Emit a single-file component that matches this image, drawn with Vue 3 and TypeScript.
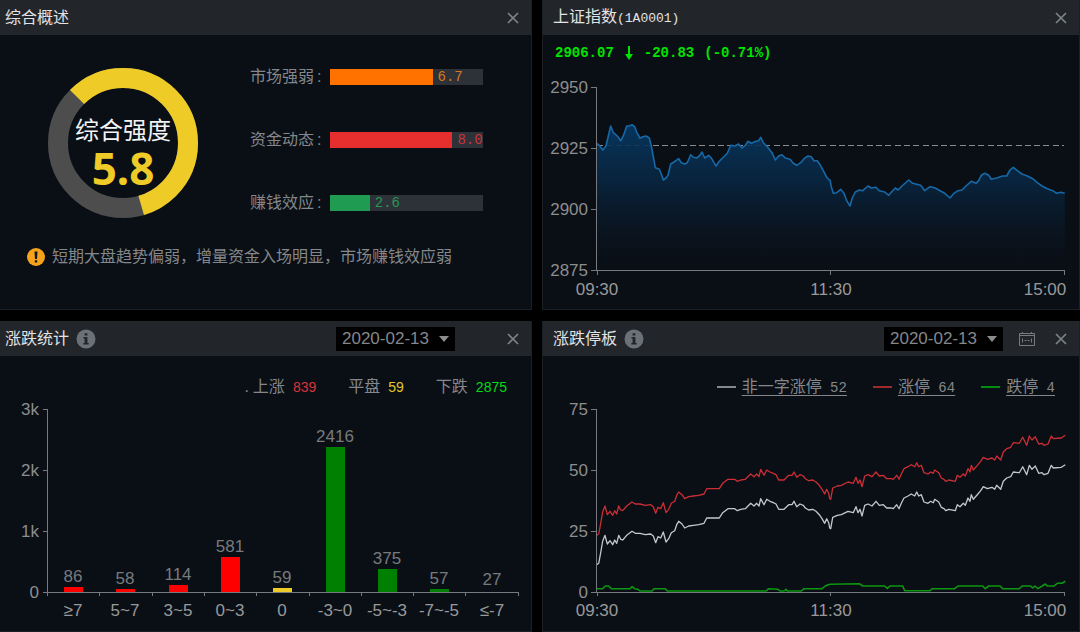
<script setup lang="ts">
import { ref } from 'vue'

type Point = [number, number]

interface Strength {
  label: string
  value: number
  tone: string
}

interface RangeBar {
  range: string
  count: number
  tone: string
}

const SESSION_WIDTH = 240
const UNITS_PER_PIXEL = 3
const ONE_WORD_GAP = 88

const score = 5.8

const strengths: Strength[] = [
  { label: '市场强弱', value: 6.7, tone: 'orange' },
  { label: '资金动态', value: 8, tone: 'red' },
  { label: '赚钱效应', value: 2.6, tone: 'green' },
]

const dates = ['2020-02-13', '2020-02-12', '2020-02-11']
const statsDate = ref(dates[0])
const limitDate = ref(dates[0])

const ranges: RangeBar[] = [
  { range: '≥7', count: 86, tone: 'up' },
  { range: '5~7', count: 58, tone: 'up' },
  { range: '3~5', count: 114, tone: 'up' },
  { range: '0~3', count: 581, tone: 'up' },
  { range: '0', count: 59, tone: 'flat' },
  { range: '-3~0', count: 2416, tone: 'down' },
  { range: '-5~-3', count: 375, tone: 'down' },
  { range: '-7~-5', count: 57, tone: 'down' },
  { range: '≤-7', count: 27, tone: 'down' },
]

const totals = [
  { label: '上涨', value: 839, tone: 'rise' },
  { label: '平盘', value: 59, tone: 'even' },
  { label: '下跌', value: 2875, tone: 'fall' },
]

const limits = [
  { label: '非一字涨停', value: 52, tone: 'white' },
  { label: '涨停', value: 64, tone: 'red' },
  { label: '跌停', value: 4, tone: 'green' },
]

const BAR_LEFT = 47
const BAR_STEP = 52.3
const BAR_BASE = 192

const bars = ranges.map((item, i) => {
  const height = Math.round(item.count * 0.06)
  const center = Math.round(BAR_LEFT + BAR_STEP * (i + 0.5))
  return { ...item, height, center, top: BAR_BASE - height }
})
const barTicks = Array.from({ length: ranges.length + 1 }, (_, i) => Math.round(BAR_LEFT + BAR_STEP * i))

const parse = (text: string): Point[] =>
  text.trim().split(/\s+/).map((pair) => pair.split(',').map(Number) as Point)

function place(points: Point[], x: number, y: number): string {
  return points.map(([px, py]) => `${(x + px / UNITS_PER_PIXEL).toFixed(1)},${(y + py / UNITS_PER_PIXEL).toFixed(1)}`).join(' ')
}

const indexMorning = parse(`
  18,130 26,134 38,150 48,138 55,108 62,78 70,98 82,108 92,122 100,108 110,78 118,78 126,74 134,80 140,96 150,115
  158,110 168,108 178,114 184,138 190,170 196,203 208,208 214,222 220,240 228,234 234,226 242,192 252,186 266,176
  274,188 284,192 292,188 302,164 310,172 320,174 328,168 336,156 344,174 356,166 364,174 372,188 378,198 388,184
  400,172 412,160 422,136 434,138 446,132 456,144 466,136 474,124 484,130 498,124 506,122 512,112 520,128 532,140
  546,158 556,180 566,168 576,164 586,174 600,178 610,190 620,196 632,188 642,176 654,168 664,170 672,182 682,182
  690,194 700,212 710,232 718,240`)
const indexAfternoon = parse(`
  0,150 4,170 10,190 20,188 32,178 42,190 50,212 60,228 66,206 76,186 88,180 98,182 114,168 124,174 138,172 148,182
  164,186 176,196 188,182 196,174 204,180 216,168 236,150 248,160 272,166 284,182 300,170 316,174 330,182 344,190
  360,204 372,190 384,182 396,180 408,168 424,154 438,160 446,152 454,136 464,130 476,136 484,148 500,144 518,138
  530,138 540,120 550,112 562,122 576,132 592,138 608,146 622,158 636,168 652,176 668,182 680,190 692,187 704,190`)

const limitUpMorning = parse(`
  20,406 26,402 32,370 38,335 45,318 52,344 60,334 68,346 74,332 80,342 86,318 92,330 98,332 110,318 126,306 136,312
  150,312 166,316 182,314 190,320 197,340 204,322 212,326 220,308 228,338 236,328 244,310 254,304 260,286 266,276
  276,284 284,296 296,290 310,288 326,286 342,282 350,266 388,266 398,250 414,238 434,238 442,244 452,240 466,238
  482,222 492,230 500,222 507,230 512,208 522,226 530,210 540,216 550,220 558,224 566,240 582,240 596,226 606,226
  612,216 620,232 630,224 640,228 646,236 656,242 668,240 678,246 688,256 696,268 704,282 710,268 716,280 719,296`)
const limitUpAfternoon = parse(`
  2,298 8,264 22,258 34,256 54,246 70,250 78,232 84,250 90,240 96,260 104,228 114,224 126,230 138,216 148,228 160,226
  170,236 184,236 190,238 200,226 207,238 214,222 222,206 234,200 244,194 254,200 260,188 266,200 274,196 282,218
  294,222 302,216 310,220 314,210 326,218 334,234 342,238 347,244 356,240 376,244 382,226 390,232 400,222 406,228
  414,206 420,216 424,196 430,210 442,196 452,184 460,172 472,178 486,174 494,180 500,168 512,180 520,156 530,146
  542,142 550,128 568,130 578,112 590,136 598,108 606,120 616,110 626,132 636,130 642,136 654,132 664,108 670,116
  694,114 706,106`)
const limitDownMorning = parse(`
  20,566 38,566 46,558 56,558 64,566 120,566 126,560 134,566 144,568 150,573 186,573 192,566 226,566 232,573 528,573
  536,566 564,568 570,573 582,573 588,568 592,573 634,573 642,566 696,566 706,558 714,554`)
const limitDownAfternoon = parse(`
  0,553 88,551 98,558 164,558 172,565 180,558 218,558 224,572 300,572 306,566 374,566 384,558 458,558 466,566 476,558
  510,558 518,566 568,566 576,558 602,558 608,564 614,558 624,566 646,552 652,558 672,558 682,550 696,550 706,544`)

const PLOT_X = 47
const joinDay = (morning: Point[], afternoon: Point[], y: number, y2 = y): string =>
  `${place(morning, PLOT_X, y)} ${place(afternoon, PLOT_X + SESSION_WIDTH, y2)}`
const lower = (points: Point[]): Point[] => points.map(([x, y]) => [x, y + ONE_WORD_GAP])

const indexLine = joinDay(indexMorning, indexAfternoon, 30, 60)
const limitUpLine = joinDay(limitUpMorning, limitUpAfternoon, 0)
const oneWordLine = joinDay(lower(limitUpMorning), lower(limitUpAfternoon), 0)
const limitDownLine = joinDay(limitDownMorning, limitDownAfternoon, 0)

const indexScale = [
  { label: '2950', y: 17 },
  { label: '2925', y: 78 },
  { label: '2900', y: 139 },
  { label: '2875', y: 200 },
]
const limitScale = [
  { label: '75', y: 9 },
  { label: '50', y: 70 },
  { label: '25', y: 131 },
  { label: '0', y: 192 },
]
const statsScale = [
  { label: '3k', y: 9 },
  { label: '2k', y: 70 },
  { label: '1k', y: 131 },
  { label: '0', y: 192 },
]
</script>

<template>
  <main class="board">
    <section class="panel">
      <header class="bar">
        <h2>综合概述</h2>
        <span class="spacer"></span>
        <button class="icon-btn" type="button" aria-label="关闭">
          <svg width="12" height="12" viewBox="0 0 12 12"><path class="cross" d="M1 1L11 11M11 1L1 11" /></svg>
        </button>
      </header>
      <div class="overview">
        <div class="summary">
          <div class="gauge">
            <svg width="150" height="150" viewBox="0 0 150 150">
              <circle class="ring" cx="75" cy="75" r="65" />
              <circle
                class="ring-value"
                cx="75"
                cy="75"
                r="65"
                pathLength="100"
                :stroke-dasharray="`${score * 10} ${100 - score * 10}`"
                transform="rotate(-135 75 75)"
              />
            </svg>
            <div class="gauge-text">
              <span class="gauge-label">综合强度</span>
              <strong class="gauge-score">{{ score }}</strong>
            </div>
          </div>
          <dl class="strengths">
            <div v-for="item in strengths" :key="item.label" class="strength">
              <dt>{{ item.label }}<span class="colon">:</span></dt>
              <dd :class="['track', item.tone]">
                <span class="fill" :style="{ width: item.value * 10 + '%' }"></span>
                <span class="track-value">{{ item.value.toFixed(1) }}</span>
              </dd>
            </div>
          </dl>
        </div>
        <p class="tip">
          <svg width="20" height="20" viewBox="0 0 20 20">
            <circle cx="10" cy="10" r="9" fill="#f5a31c" />
            <path d="M8.5 4.500h3l-.5 7.500h-2zM8.800 13.200h2.400v2.300h-2.400z" fill="#10141b" />
          </svg>
          短期大盘趋势偏弱，增量资金入场明显，市场赚钱效应弱
        </p>
      </div>
    </section>

    <section class="panel right">
      <header class="bar">
        <h2>上证指数<span class="code">(1A0001)</span></h2>
        <span class="spacer"></span>
        <button class="icon-btn" type="button" aria-label="关闭">
          <svg width="12" height="12" viewBox="0 0 12 12"><path class="cross" d="M1 1L11 11M11 1L1 11" /></svg>
        </button>
      </header>
      <p class="quote">
        <span>2906.07</span>
        <svg width="10" height="16" viewBox="0 0 10 16"><path d="M4 1h2v8h3L5 15 1 9h3z" fill="#00e400" /></svg>
        <span>-20.83</span>
        <span>(-0.71%)</span>
      </p>
      <svg class="chart" viewBox="0 0 536 239">
        <defs>
          <linearGradient id="area" x1="0" y1="55" x2="0" y2="200" gradientUnits="userSpaceOnUse">
            <stop offset="0" stop-color="#073760" stop-opacity="0.95" />
            <stop offset="0.4" stop-color="#082845" stop-opacity="0.8" />
            <stop offset="1" stop-color="#0a1420" stop-opacity="0" />
          </linearGradient>
        </defs>
        <path class="dashed" d="M54 75H521" />
        <polygon :points="`53,200 ${indexLine} 522,200`" fill="url(#area)" />
        <polyline class="line blue" :points="indexLine" />
        <path class="axis" d="M53 17V200M53 200H522M54 200v5M287 200v5M521 200v5" />
        <g v-for="tick in indexScale" :key="tick.label">
          <path class="axis" :d="`M48 ${tick.y}h5`" />
          <text class="scale" x="45" :y="tick.y + 6">{{ tick.label }}</text>
        </g>
        <text class="time" x="54" y="225">09:30</text>
        <text class="time" x="288" y="225">11:30</text>
        <text class="time" x="502" y="225">15:00</text>
      </svg>
    </section>

    <section class="panel">
      <header class="bar">
        <h2>涨跌统计</h2>
        <svg class="info" width="20" height="20" viewBox="0 0 20 20">
          <circle cx="10" cy="10" r="9.500" fill="#6c7077" />
          <path d="M8.600 4.300h2.800v2.200h-2.800zM7.500 8h3.900v6h1.300v1.500H7.300V14h1.300V9.500H7.500z" fill="#22262b" />
        </svg>
        <span class="spacer"></span>
        <span class="picker">
          <select v-model="statsDate" aria-label="涨跌统计日期">
            <option v-for="date in dates" :key="date">{{ date }}</option>
          </select>
          <svg class="caret" width="10" height="6" viewBox="0 0 10 6"><path d="M0 0h10L5 6z" fill="#8c8c8c" /></svg>
        </span>
        <span class="slot"></span>
        <button class="icon-btn" type="button" aria-label="关闭">
          <svg width="12" height="12" viewBox="0 0 12 12"><path class="cross" d="M1 1L11 11M11 1L1 11" /></svg>
        </button>
      </header>
      <div class="legend totals">
        <span v-for="(item, i) in totals" :key="item.label" class="total">
          <span><span v-if="i === 0" class="dot">.</span>{{ item.label }}</span>
          <span :class="['amount', item.tone]">{{ item.value }}</span>
        </span>
      </div>
      <svg class="chart" viewBox="0 0 531 231">
        <g v-for="bar in bars" :key="bar.range">
          <rect v-if="bar.height > 2" :class="bar.tone" :x="bar.center - 9" :y="bar.top" width="19" :height="bar.height" />
          <text class="count" :x="bar.center" :y="bar.top - 5">{{ bar.count }}</text>
          <text class="time" :x="bar.center" y="216">{{ bar.range }}</text>
        </g>
        <path class="axis" d="M47 9V192M47 192H518" />
        <path v-for="x in barTicks" :key="x" class="axis" :d="`M${x} 192v4`" />
        <g v-for="tick in statsScale" :key="tick.label">
          <path class="axis" :d="`M43 ${tick.y}h4`" />
          <text class="scale" x="39" :y="tick.y + 6">{{ tick.label }}</text>
        </g>
      </svg>
    </section>

    <section class="panel right">
      <header class="bar">
        <h2>涨跌停板</h2>
        <svg class="info" width="20" height="20" viewBox="0 0 20 20">
          <circle cx="10" cy="10" r="9.500" fill="#6c7077" />
          <path d="M8.600 4.300h2.800v2.200h-2.800zM7.500 8h3.900v6h1.300v1.500H7.300V14h1.300V9.500H7.500z" fill="#22262b" />
        </svg>
        <span class="spacer"></span>
        <span class="picker">
          <select v-model="limitDate" aria-label="涨跌停板日期">
            <option v-for="date in dates" :key="date">{{ date }}</option>
          </select>
          <svg class="caret" width="10" height="6" viewBox="0 0 10 6"><path d="M0 0h10L5 6z" fill="#8c8c8c" /></svg>
        </span>
        <button class="icon-btn" type="button" aria-label="日期区间">
          <svg width="16" height="14" viewBox="0 0 16 14" fill="none" stroke="#777b80">
            <path d="M.5 1.500H15.500V13.500H.5zM1 3.500H15M3.500 0v2M12.500 0v2M3.500 6.500v4M12.500 6.500v4" />
            <path d="M5.500 8.500h2M8.500 8.500h2" />
          </svg>
        </button>
        <button class="icon-btn" type="button" aria-label="关闭">
          <svg width="12" height="12" viewBox="0 0 12 12"><path class="cross" d="M1 1L11 11M11 1L1 11" /></svg>
        </button>
      </header>
      <nav class="legend limits">
        <span v-for="item in limits" :key="item.label" class="limit">
          <i :class="['swatch', item.tone]"></i>
          <a href="#">{{ item.label }}<span class="digits">{{ ` ${item.value}` }}</span></a>
        </span>
      </nav>
      <svg class="chart" viewBox="0 0 536 231">
        <polyline class="line red" :points="limitUpLine" />
        <polyline class="line white" :points="oneWordLine" />
        <path class="axis" d="M53 9V192M53 192H522M54 192v4M287 192v4M521 192v4" />
        <polyline class="line green" :points="limitDownLine" />
        <g v-for="tick in limitScale" :key="tick.label">
          <path class="axis" :d="`M48 ${tick.y}h5`" />
          <text class="scale" x="45" :y="tick.y + 6">{{ tick.label }}</text>
        </g>
        <text class="time" x="54" y="216">09:30</text>
        <text class="time" x="288" y="216">11:30</text>
        <text class="time" x="502" y="216">15:00</text>
      </svg>
    </section>
  </main>
</template>

<style>
body {
  margin: 0;
  background: #000;
}
</style>

<style scoped>
.board {
  display: grid;
  grid-template-columns: 532fr 538fr;
  gap: 11px 10px;
  color: #85878a;
  font: 16px/24px "Liberation Sans", "Noto Sans CJK SC", sans-serif;
}

.panel {
  display: flex;
  flex-direction: column;
  min-width: 0;
  background: #0a0f16;
  border: solid #1c1f23;
  border-width: 0 1px 1px 0;
}

.panel.right {
  border-left-width: 1px;
}

.bar {
  display: flex;
  align-items: center;
  height: 35px;
  padding: 0 8px 0 5px;
  background: #22262b;
}

.right .bar {
  padding-left: 10px;
}

h2 {
  margin: 0;
  color: #e2e3e4;
  font-size: 16px;
  font-weight: 400;
}

.code {
  font-family: "Liberation Mono", monospace;
  font-size: 13px;
}

.info {
  margin-left: 7px;
}

.spacer {
  flex: 1;
}

.icon-btn,
.slot {
  display: flex;
  align-items: center;
  justify-content: center;
  width: 20px;
  height: 20px;
  margin-left: 14px;
  padding: 0;
  border: 0;
  background: none;
}

.cross {
  fill: none;
  stroke: #7f8388;
  stroke-width: 1.7;
}

.picker {
  position: relative;
}

.picker select {
  display: block;
  width: 119px;
  height: 24px;
  padding: 0 6px;
  border: 0;
  border-radius: 0;
  appearance: none;
  background: #000;
  color: #85878a;
  font: 17px/24px "Liberation Sans", sans-serif;
}

.caret {
  position: absolute;
  top: 9px;
  right: 6px;
  pointer-events: none;
}

.overview {
  padding: 30px 47px 39px 26px;
}

.summary {
  display: flex;
  align-items: flex-start;
  gap: 52px;
  padding-left: 22px;
}

.gauge {
  display: grid;
  padding-top: 3px;
}

.gauge > * {
  grid-area: 1 / 1;
}

.ring,
.ring-value {
  fill: none;
  stroke: #4d4d4d;
  stroke-width: 20;
}

.ring-value {
  stroke: #efcb27;
}

.gauge-text {
  display: flex;
  flex-direction: column;
  align-items: center;
  padding-top: 49px;
}

.gauge-label {
  color: #f4f4f4;
  font-size: 24px;
  line-height: 28px;
}

.gauge-score {
  color: #efcb27;
  font: 700 44px/46px "Noto Sans", sans-serif;
}

.strengths {
  display: flex;
  flex: 1;
  flex-direction: column;
  gap: 39px;
  margin: 0;
}

.strength {
  display: flex;
  align-items: center;
}

dt {
  width: 80px;
  white-space: nowrap;
}

.colon {
  padding-left: 3px;
}

.track {
  display: flex;
  flex: 0 0 153px;
  align-items: center;
  height: 16px;
  margin: 0;
  background: #2d3138;
  font: 14px/16px "Liberation Mono", monospace;
}

.fill {
  flex: none;
  align-self: stretch;
}

.track-value {
  padding-left: 5px;
}

.orange {
  color: #d9781c;
}

.orange .fill {
  background: #ff7200;
}

.track.red {
  color: #c9343a;
}

.track.red .fill {
  background: #e52e2e;
}

.track.green {
  color: #279653;
}

.track.green .fill {
  background: #1f9c52;
}

.tip {
  display: flex;
  align-items: center;
  gap: 6px;
  margin: 27px 0 0;
  white-space: nowrap;
}

.quote {
  display: flex;
  align-items: center;
  height: 35px;
  margin: 0;
  padding-left: 12px;
  gap: 10px;
  color: #00e400;
  font: 700 14px/20px "Liberation Mono", monospace;
}

.chart {
  display: block;
  width: 100%;
}

.axis {
  fill: none;
  stroke: #77797c;
  stroke-width: 1;
  shape-rendering: crispEdges;
}

.dashed {
  stroke: #8b8b8b;
  stroke-width: 1;
  stroke-dasharray: 6 3.3;
  shape-rendering: crispEdges;
}

.scale,
.count,
.time {
  fill: #8d8d8d;
  font-size: 17px;
}

.scale {
  text-anchor: end;
}

.time,
.count {
  text-anchor: middle;
}

.time {
  fill: #999;
}

.count {
  fill: #777a7d;
}

.up {
  fill: #f00;
}

.flat {
  fill: #efcb27;
}

.down {
  fill: #008000;
}

.line {
  fill: none;
  stroke-width: 1.3;
  stroke-linejoin: round;
}

.line.blue {
  stroke: #1668a6;
  stroke-width: 1.6;
}

.line.red {
  stroke: #cd2d35;
}

.line.white {
  stroke: #c5c7cb;
}

.line.green {
  stroke: #0b970f;
  stroke-width: 1.6;
}

.legend {
  display: flex;
  align-items: center;
  justify-content: flex-end;
  height: 24px;
  padding: 19px 24px 1px 0;
  white-space: nowrap;
}

.totals {
  gap: 32px;
}

.total {
  display: flex;
  align-items: center;
  gap: 8px;
}

.dot {
  padding-right: 4px;
}

.amount {
  font-size: 14px;
}

.rise {
  color: #d9333a;
}

.even {
  color: #e3c62a;
}

.fall {
  color: #00dc14;
}

.limits {
  gap: 26px;
}

.limit {
  display: flex;
  align-items: center;
  gap: 6px;
}

.limit a {
  color: #85878a;
  text-decoration-skip-ink: none;
  text-underline-offset: 3px;
}

.digits {
  font-family: "Liberation Mono", monospace;
  font-size: 14px;
  white-space: pre;
}

.swatch {
  width: 19px;
  height: 2px;
}

.swatch.white {
  background: #85878a;
}

.swatch.red {
  background: #9f2a2c;
}

.swatch.green {
  background: #008c0c;
}
</style>
